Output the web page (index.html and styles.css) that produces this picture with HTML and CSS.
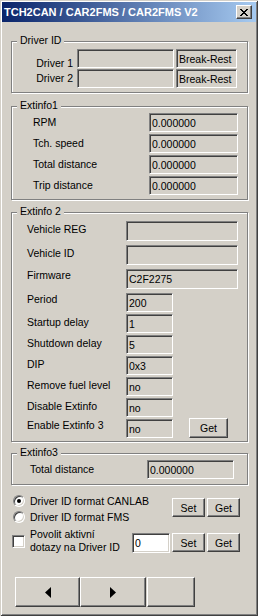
FILE: index.html
```html
<!DOCTYPE html>
<html lang="en">
<head>
    <meta charset="UTF-8">
    <title>TCH2CAN / CAR2FMS / CAR2FMS V2</title>
    <link rel="stylesheet" href="styles.css">
</head>
<body>
    <div class="ventana">
        <div class="titulo">
            <span class="titulo-texto">TCH2CAN / CAR2FMS / CAR2FMS V2</span>
            <button class="cerrar">
                <svg width="8" height="7" viewBox="0 0 8 7" shape-rendering="crispEdges">
                    <path d="M0 0h2v1h1v1h2v-1h1v-1h2v1h-1v1h-1v1h-1v1h1v1h1v1h1v1h-2v-1h-1v-1h-2v1h-1v1h-2v-1h1v-1h1v-1h1v-1h-1v-1h-1v-1h-1z" fill="#000"/>
                </svg>
            </button>
        </div>

        <div class="cliente">
            <!-- Driver ID -->
            <div class="grupo grupo-driver">
                <span class="leyenda">Driver ID</span>
                <div class="fila-driver">
                    <span class="etiqueta-driver driver-1">Driver 1</span>
                    <div class="campo campo-driver"></div>
                    <div class="campo campo-break">Break-Rest</div>
                </div>
                <div class="fila-driver">
                    <span class="etiqueta-driver driver-2">Driver 2</span>
                    <div class="campo campo-driver"></div>
                    <div class="campo campo-break">Break-Rest</div>
                </div>
            </div>

            <!-- Extinfo1 -->
            <div class="grupo grupo-ext1">
                <span class="leyenda">Extinfo1</span>
                <div class="fila">
                    <span class="etiqueta">RPM</span>
                    <div class="campo campo-ext1">0.000000</div>
                </div>
                <div class="fila">
                    <span class="etiqueta">Tch. speed</span>
                    <div class="campo campo-ext1">0.000000</div>
                </div>
                <div class="fila">
                    <span class="etiqueta">Total distance</span>
                    <div class="campo campo-ext1">0.000000</div>
                </div>
                <div class="fila">
                    <span class="etiqueta">Trip distance</span>
                    <div class="campo campo-ext1">0.000000</div>
                </div>
            </div>

            <!-- Extinfo 2 -->
            <div class="grupo grupo-ext2">
                <span class="leyenda">Extinfo 2</span>
                <div class="fila-ancha">
                    <span class="etiqueta-ext2">Vehicle REG</span>
                    <div class="campo campo-ancho"></div>
                </div>
                <div class="fila-ancha">
                    <span class="etiqueta-ext2">Vehicle ID</span>
                    <div class="campo campo-ancho"></div>
                </div>
                <div class="fila-ancha">
                    <span class="etiqueta-ext2 alto">Firmware</span>
                    <div class="campo campo-ancho">C2F2275</div>
                </div>
                <div class="fila-corta primera">
                    <span class="etiqueta-ext2 alto">Period</span>
                    <div class="campo campo-corto">200</div>
                </div>
                <div class="fila-corta">
                    <span class="etiqueta-ext2">Startup delay</span>
                    <div class="campo campo-corto">1</div>
                </div>
                <div class="fila-corta">
                    <span class="etiqueta-ext2">Shutdown delay</span>
                    <div class="campo campo-corto">5</div>
                </div>
                <div class="fila-corta">
                    <span class="etiqueta-ext2">DIP</span>
                    <div class="campo campo-corto">0x3</div>
                </div>
                <div class="fila-corta">
                    <span class="etiqueta-ext2">Remove fuel level</span>
                    <div class="campo campo-corto">no</div>
                </div>
                <div class="fila-corta">
                    <span class="etiqueta-ext2">Disable Extinfo</span>
                    <div class="campo campo-corto">no</div>
                </div>
                <div class="fila-corta">
                    <span class="etiqueta-ext2 alto">Enable Extinfo 3</span>
                    <div class="campo campo-corto">no</div>
                    <button class="boton boton-get">Get</button>
                </div>
            </div>

            <!-- Extinfo3 -->
            <div class="grupo grupo-ext3">
                <span class="leyenda">Extinfo3</span>
                <div class="fila">
                    <span class="etiqueta">Total distance</span>
                    <div class="campo campo-ext3">0.000000</div>
                </div>
            </div>

            <!-- formato -->
            <div class="opciones">
                <div class="radios">
                    <label class="radio-linea">
                        <span class="radio"><span class="punto"></span></span>
                        Driver ID format CANLAB
                    </label>
                    <label class="radio-linea">
                        <span class="radio"></span>
                        Driver ID format FMS
                    </label>
                </div>
                <div class="par-botones">
                    <button class="boton boton-par">Set</button>
                    <button class="boton boton-par">Get</button>
                </div>
            </div>

            <div class="opciones-check">
                <span class="check"></span>
                <span class="check-texto">Povolit aktivní<br>dotazy na Driver ID</span>
                <div class="par-botones">
                    <div class="campo campo-blanco">0</div>
                    <button class="boton boton-par">Set</button>
                    <button class="boton boton-par">Get</button>
                </div>
            </div>

            <!-- navegacion -->
            <div class="navegacion">
                <button class="boton nav-izq">
                    <svg width="6" height="11" viewBox="0 0 6 11"><polygon points="6,0 6,11 0,5.5" fill="#000"/></svg>
                </button>
                <button class="boton nav-der">
                    <svg width="6" height="11" viewBox="0 0 6 11"><polygon points="0,0 0,11 6,5.5" fill="#000"/></svg>
                </button>
                <button class="boton nav-vacio"></button>
            </div>
        </div>
    </div>
</body>
</html>
```

FILE: styles.css
```css
/* ---------------- ventana clasica ---------------- */
* {
    box-sizing: border-box;
}

body {
    margin: 0;
    font-family: "Liberation Sans", Arial, sans-serif;
    font-size: 10.5px;
    color: #000;
    background: #d4d0c8;
}

.ventana {
    width: 258px;
    height: 616px;
    padding: 2px;
    background: #d4d0c8;
    box-shadow: inset 1px 1px #d4d0c8, inset -1px -1px #404040,
                inset 2px 2px #fff, inset -2px -2px #808080;
}

.titulo {
    display: flex;
    align-items: center;
    height: 20px;
    padding-left: 2px;
    background: linear-gradient(to right, #0a246a, #a6caf0);
}

.titulo-texto {
    color: #fff;
    font-weight: bold;
    font-size: 11px;
    white-space: nowrap;
}

.cerrar {
    margin-left: auto;
    margin-right: 4px;
    width: 16px;
    height: 14px;
    padding: 0;
    display: flex;
    align-items: center;
    justify-content: center;
    background: #d4d0c8;
    border: 1px solid;
    border-color: #fff #404040 #404040 #fff;
    box-shadow: inset -1px -1px #808080;
}

.cliente {
    padding: 0 8px 0 9px;
}

/* ---------------- grupos ---------------- */
.grupo {
    position: relative;
    width: 237px;
    border: 1px solid #808080;
    box-shadow: inset 1px 1px #fff, 1px 1px #fff;
}

.leyenda {
    position: absolute; /* va encima del borde del grupo */
    top: -8px;
    left: 5px;
    padding: 0 3px;
    line-height: 13px;
    background: #d4d0c8;
}

.campo {
    height: 19px;
    padding: 0 2px;
    line-height: 18px;
    white-space: nowrap;
    overflow: hidden;
    background: #d4d0c8;
    border: 1px solid;
    border-color: #808080 #fff #fff #808080;
    box-shadow: inset 1px 1px #404040, inset -1px -1px #d4d0c8;
}

/* Driver ID */
.grupo-driver {
    margin-top: 19px;
    padding: 7px 10px 4px 0;
}

.fila-driver {
    display: flex;
    height: 19px;
}

.fila-driver + .fila-driver {
    margin-top: 1px;
}

.etiqueta-driver {
    width: 61px;
    margin-right: 4px;
    text-align: right;
    line-height: 13px;
}

.driver-1 {
    padding-top: 8px;
}

.driver-2 {
    padding-top: 3px;
}

.campo-driver {
    width: 97px;
    margin-right: 2px;
}

.campo-break {
    width: 61px;
}

/* Extinfo1 */
.grupo-ext1 {
    margin-top: 13px;
    padding: 6px 9px 4px 21px;
}

.fila {
    display: flex;
    align-items: center;
    height: 19px;
}

.fila + .fila {
    margin-top: 2px;
}

.etiqueta {
    flex: 1;
    line-height: 13px;
}

.campo-ext1 {
    width: 89px;
}

/* Extinfo 2 */
.grupo-ext2 {
    margin-top: 12px;
    padding: 8px 9px 3px 15px;
}

.fila-ancha,
.fila-corta {
    display: flex;
    align-items: flex-start;
}

.fila-ancha + .fila-ancha {
    margin-top: 4px;
}

.fila-corta {
    margin-top: 2px;
}

.fila-corta.primera {
    margin-top: 4px;
}

.etiqueta-ext2 {
    width: 99px;
    padding-top: 2px;
    line-height: 13px;
    white-space: nowrap;
}

.etiqueta-ext2.alto {
    padding-top: 0;
}

.campo-ancho {
    width: 112px;
    height: 20px;
    line-height: 19px;
}

.campo-corto {
    width: 47px;
}

/* Extinfo3 */
.grupo-ext3 {
    margin-top: 11px;
    padding: 6px 13px 5px 18px;
}

.campo-ext3 {
    width: 87px;
}

/* ---------------- botones ---------------- */
.boton {
    padding: 0;
    font-family: inherit;
    font-size: 10.5px;
    color: #000;
    background: #d4d0c8;
    border: 1px solid;
    border-color: #fff #404040 #404040 #fff;
    box-shadow: inset -1px -1px #808080;
}

.boton-get {
    width: 39px;
    height: 20px;
    margin-left: 16px;
    margin-top: -1px;
}

.boton-par {
    width: 33px;
    height: 19px;
}

.boton-par + .boton-par {
    margin-left: 2px;
}

/* ---------------- opciones ---------------- */
.opciones {
    display: flex;
    margin-top: 8px;
}

.radios {
    display: flex;
    flex-direction: column;
}

.radio-linea {
    display: flex;
    align-items: center;
    height: 16px;
    padding-left: 2px;
    white-space: nowrap;
}

.radio {
    display: flex;
    align-items: center;
    justify-content: center;
    width: 12px;
    height: 12px;
    margin-right: 5px;
    border-radius: 50%;
    background: #fff;
    border: 1px solid;
    border-color: #808080 #fff #fff #808080;
    box-shadow: inset 1px 1px #404040, inset -1px -1px #d4d0c8;
}

.punto {
    width: 4px;
    height: 4px;
    border-radius: 50%;
    background: #000;
}

.par-botones {
    display: flex;
    margin-left: auto;
    margin-right: 8px;
    margin-top: 5px;
}

.opciones-check {
    display: flex;
    align-items: center;
    height: 26px;
    margin-top: 3px;
}

.opciones-check .par-botones {
    align-self: flex-start;
}

.check {
    width: 13px;
    height: 13px;
    margin-left: 1px;
    margin-right: 5px;
    background: #fff;
    border: 1px solid;
    border-color: #808080 #fff #fff #808080;
    box-shadow: inset 1px 1px #404040, inset -1px -1px #d4d0c8;
}

.check-texto {
    line-height: 13px;
    white-space: nowrap;
}

.campo-blanco {
    width: 38px;
    height: 20px;
    line-height: 19px;
    margin-right: 2px;
    margin-top: 0;
    background: #fff;
}

/* ---------------- navegacion ---------------- */
.navegacion {
    display: flex;
    margin-top: 23px;
    padding-left: 4px;
}

.navegacion .boton {
    height: 30px;
    display: flex;
    align-items: center;
    justify-content: center;
}

.nav-izq {
    width: 65px;
}

.nav-der {
    width: 66px;
}

.nav-vacio {
    width: 48px;
    margin-left: 1px;
}
```
